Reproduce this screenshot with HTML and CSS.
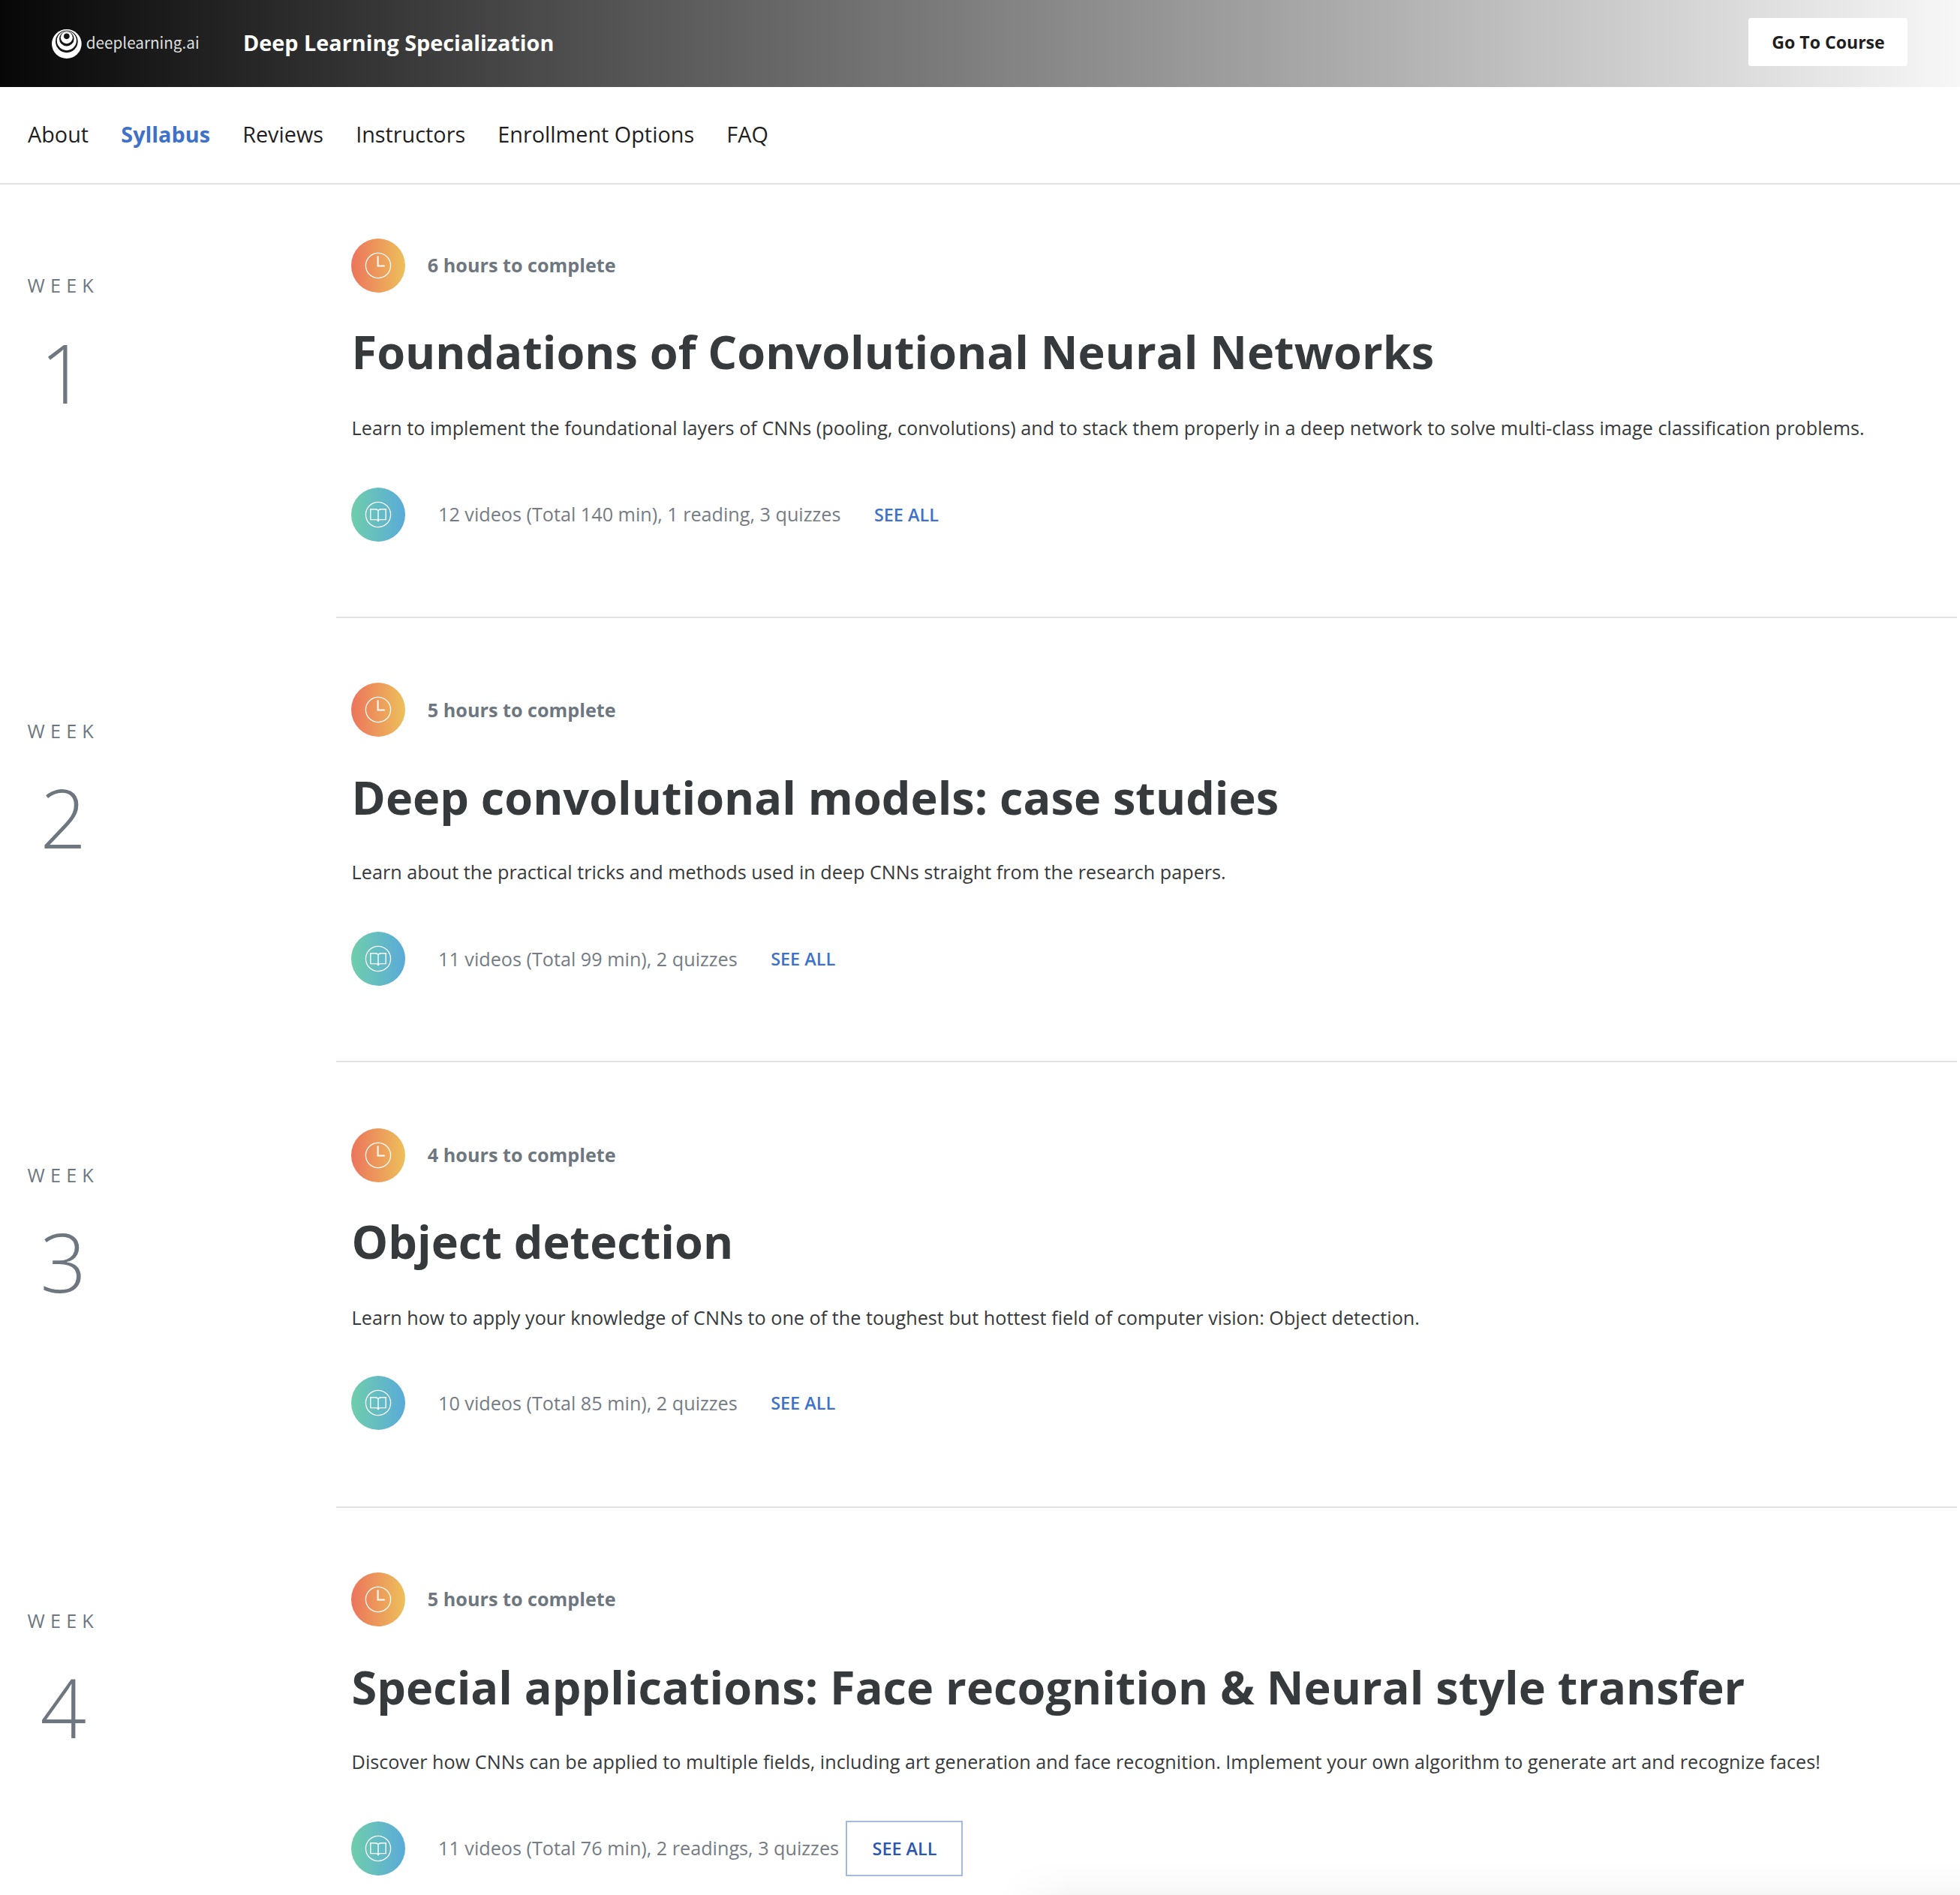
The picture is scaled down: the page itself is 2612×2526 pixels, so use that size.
FILE: index.html
```
<!DOCTYPE html>
<html lang="en">
<head>
<meta charset="utf-8">
<title>Deep Learning Specialization - Syllabus</title>
<link rel="stylesheet" href="styles.css">
</head>
<body>
<svg class="defs" aria-hidden="true">
  <symbol id="clock" viewBox="0 0 36 36">
    <circle cx="18" cy="18" r="16.6" fill="none" stroke="#fff" stroke-width="1.3"/>
    <path d="M17.6 5.2V18.4H26.8" fill="none" stroke="#fff" stroke-width="2"/>
  </symbol>
  <symbol id="book" viewBox="0 0 36 36">
    <circle cx="18" cy="18" r="16.6" fill="none" stroke="#fff" stroke-width="1.3"/>
    <path d="M18 12.6C17 11.2 15.6 10.8 14 10.8H7.8V24.6H14.6C16.2 24.6 17.4 25 18 26.4C18.6 25 19.8 24.6 21.4 24.6H28.2V10.8H22C20.4 10.8 19 11.2 18 12.6ZM18 12.6V27" fill="none" stroke="#fff" stroke-width="1.4"/>
  </symbol>
</svg>

<header class="header">
  <div class="brand">
    <svg class="brand-mark" viewBox="0 0 119 117">
      <ellipse cx="59.5" cy="58.5" rx="59.5" ry="58.5" fill="#fff"/>
      <circle cx="59.5" cy="49" r="44.5" fill="#141414"/>
      <circle cx="59.5" cy="45.5" r="39" fill="#fff"/>
      <circle cx="59.5" cy="38" r="29.5" fill="#151515"/>
      <circle cx="59.5" cy="33.5" r="24" fill="#fff"/>
      <circle cx="59.5" cy="28" r="11.5" fill="#161616"/>
    </svg>
    <span class="brand-name">deeplearning.ai</span>
  </div>
  <div class="header-title">Deep Learning Specialization</div>
  <button class="go">Go To Course</button>
</header>

<nav class="nav">
  <a>About</a><a class="active">Syllabus</a><a>Reviews</a><a>Instructors</a><a>Enrollment Options</a><a>FAQ</a>
</nav>

<main class="weeks">
  <section class="week">
    <div class="side"><div class="label">WEEK</div><div class="number">1</div></div>
    <div class="content">
      <div class="time"><span class="badge warm"><svg><use href="#clock"/></svg></span><span class="text">6 hours to complete</span></div>
      <h2>Foundations of Convolutional Neural Networks</h2>
      <p>Learn to implement the foundational layers of CNNs (pooling, convolutions) and to stack them properly in a deep network to solve multi-class image classification problems.</p>
      <div class="items"><span class="badge cool"><svg><use href="#book"/></svg></span><span class="text">12 videos (Total 140 min), 1 reading, 3 quizzes</span><button class="see">SEE ALL</button></div>
    </div>
  </section>
  <section class="week">
    <div class="side"><div class="label">WEEK</div><div class="number">2</div></div>
    <div class="content">
      <div class="time"><span class="badge warm"><svg><use href="#clock"/></svg></span><span class="text">5 hours to complete</span></div>
      <h2>Deep convolutional models: case studies</h2>
      <p>Learn about the practical tricks and methods used in deep CNNs straight from the research papers.</p>
      <div class="items"><span class="badge cool"><svg><use href="#book"/></svg></span><span class="text">11 videos (Total 99 min), 2 quizzes</span><button class="see">SEE ALL</button></div>
    </div>
  </section>
  <section class="week">
    <div class="side"><div class="label">WEEK</div><div class="number">3</div></div>
    <div class="content">
      <div class="time"><span class="badge warm"><svg><use href="#clock"/></svg></span><span class="text">4 hours to complete</span></div>
      <h2>Object detection</h2>
      <p>Learn how to apply your knowledge of CNNs to one of the toughest but hottest field of computer vision: Object detection.</p>
      <div class="items"><span class="badge cool"><svg><use href="#book"/></svg></span><span class="text">10 videos (Total 85 min), 2 quizzes</span><button class="see">SEE ALL</button></div>
    </div>
  </section>
  <section class="week">
    <div class="side"><div class="label">WEEK</div><div class="number">4</div></div>
    <div class="content">
      <div class="time"><span class="badge warm"><svg><use href="#clock"/></svg></span><span class="text">5 hours to complete</span></div>
      <h2>Special applications: Face recognition &amp; Neural style transfer</h2>
      <p>Discover how CNNs can be applied to multiple fields, including art generation and face recognition. Implement your own algorithm to generate art and recognize faces!</p>
      <div class="items"><span class="badge cool"><svg><use href="#book"/></svg></span><span class="text">11 videos (Total 76 min), 2 readings, 3 quizzes</span><button class="see focused">SEE ALL</button></div>
    </div>
  </section>
</main>
<div class="panel-shadow"></div>
</body>
</html>
```
FILE: styles.css
```
* { box-sizing: border-box; }
html, body { height: 100%; }
body {
  margin: 0;
  background: #fff;
  color: #373a3c;
  font-family: "Open Sans", sans-serif;
  font-size: 25.2px;
  position: relative;
  overflow: hidden;
}
button { font-family: inherit; border: 0; padding: 0; }
.defs { display: none; }

.header {
  display: flex;
  align-items: center;
  height: 116px;
  padding: 0 70px 0 69px;
  background: linear-gradient(to right, #070707, #525252 30.6%, #d1d1d1 84.7%, #f7f7f7);
}
.brand { display: flex; align-items: center; gap: 6px; width: 255px; }
.brand-mark { width: 39.7px; height: 39px; }
.brand-name {
  font: 400 20.7px/30px "Noto Sans CJK SC", "Open Sans", sans-serif;
  color: #dedede;
  margin-top: -4px;
}
.header-title {
  flex: 1;
  padding-bottom: 2px;
  font-size: 28.8px;
  font-weight: 700;
  line-height: 40px;
  color: #fff;
}
.go {
  width: 212px;
  height: 64px;
  margin-bottom: 4px;
  padding: 0 0 1px 1px;
  border-radius: 3px;
  background: #fff;
  color: #1f1f1f;
  font-size: 23.1px;
  font-weight: 700;
}

.nav {
  display: flex;
  align-items: center;
  gap: 43.2px;
  height: 130px;
  padding: 0 0 3px 37px;
  border-bottom: 2px solid #e1e1e1;
  font-size: 28.8px;
  color: #1f1f1f;
}
.nav .active { font-weight: 700; color: #3e71c9; }

.week { display: grid; grid-template-columns: 448px 1fr; padding-right: 4px; }
.side {
  justify-self: start;
  margin-left: 36.5px;
  padding-top: 132px;
  text-align: center;
  color: #6e7780;
}
.label { line-height: 36px; letter-spacing: 7.2px; }
.number { margin-top: 23px; font-size: 108px; font-weight: 300; line-height: 150px; }
.content { padding: 86px 20px 100px; border-bottom: 2px solid #e1e1e1; }
.week:first-child .content { padding-top: 72px; }
.week:first-child .side { padding-top: 116px; }
.week:first-child .number { margin-top: 24px; }
.week:nth-child(3) .content { padding: 88px 20px 102px; }
.week:last-child .content { padding-bottom: 24px; border-bottom: 0; }

.time, .items { display: flex; align-items: center; height: 72px; }
.time { gap: 29.8px; font-weight: 700; color: #6e7780; }
.time .text { padding-bottom: 3px; }
.week:nth-child(2) .time .text { padding-bottom: 0; }
.items { margin-top: 62px; color: #757c85; }
.items .badge { margin-right: 44px; }
.items .text { padding-bottom: 2px; }
.week:nth-child(2) .items .text, .week:nth-child(3) .items .text { padding-bottom: 0; }
.badge {
  display: flex;
  align-items: center;
  justify-content: center;
  width: 72px;
  height: 72px;
  border-radius: 50%;
}
.badge svg { width: 36px; height: 36px; }
.warm { background: linear-gradient(to right, #ec745b, #edc05b); }
.cool { background: linear-gradient(to right, #6fceab, #5aaad9); }

h2 { margin: 38px 0 0; padding-left: .6px; font-size: 61.2px; font-weight: 700; line-height: 82px; }
p { margin: 42px 0 0; padding-left: .6px; line-height: 36px; letter-spacing: .012px; white-space: nowrap; }
.week:nth-child(even) h2 { margin-top: 40px; }
.week:nth-child(even) p { margin-top: 40px; }
.week:nth-child(3) .items { margin-top: 60px; }

.see {
  width: 156px;
  height: 74px;
  margin-left: 9.4px;
  padding-bottom: 1px;
  background: none;
  font-size: 23.4px;
  font-weight: 600;
  color: #3e71c9;
}
.focused { border: 2px solid #a0b9ea; color: #2a56b0; }

.panel-shadow {
  position: absolute;
  right: 0;
  bottom: 0;
  width: 1280px;
  height: 46px;
  background: linear-gradient(to top, rgba(0, 0, 0, .035), rgba(0, 0, 0, .012) 50%, transparent);
  -webkit-mask-image: linear-gradient(to right, transparent, #000 96px);
  mask-image: linear-gradient(to right, transparent, #000 96px);
}
```
